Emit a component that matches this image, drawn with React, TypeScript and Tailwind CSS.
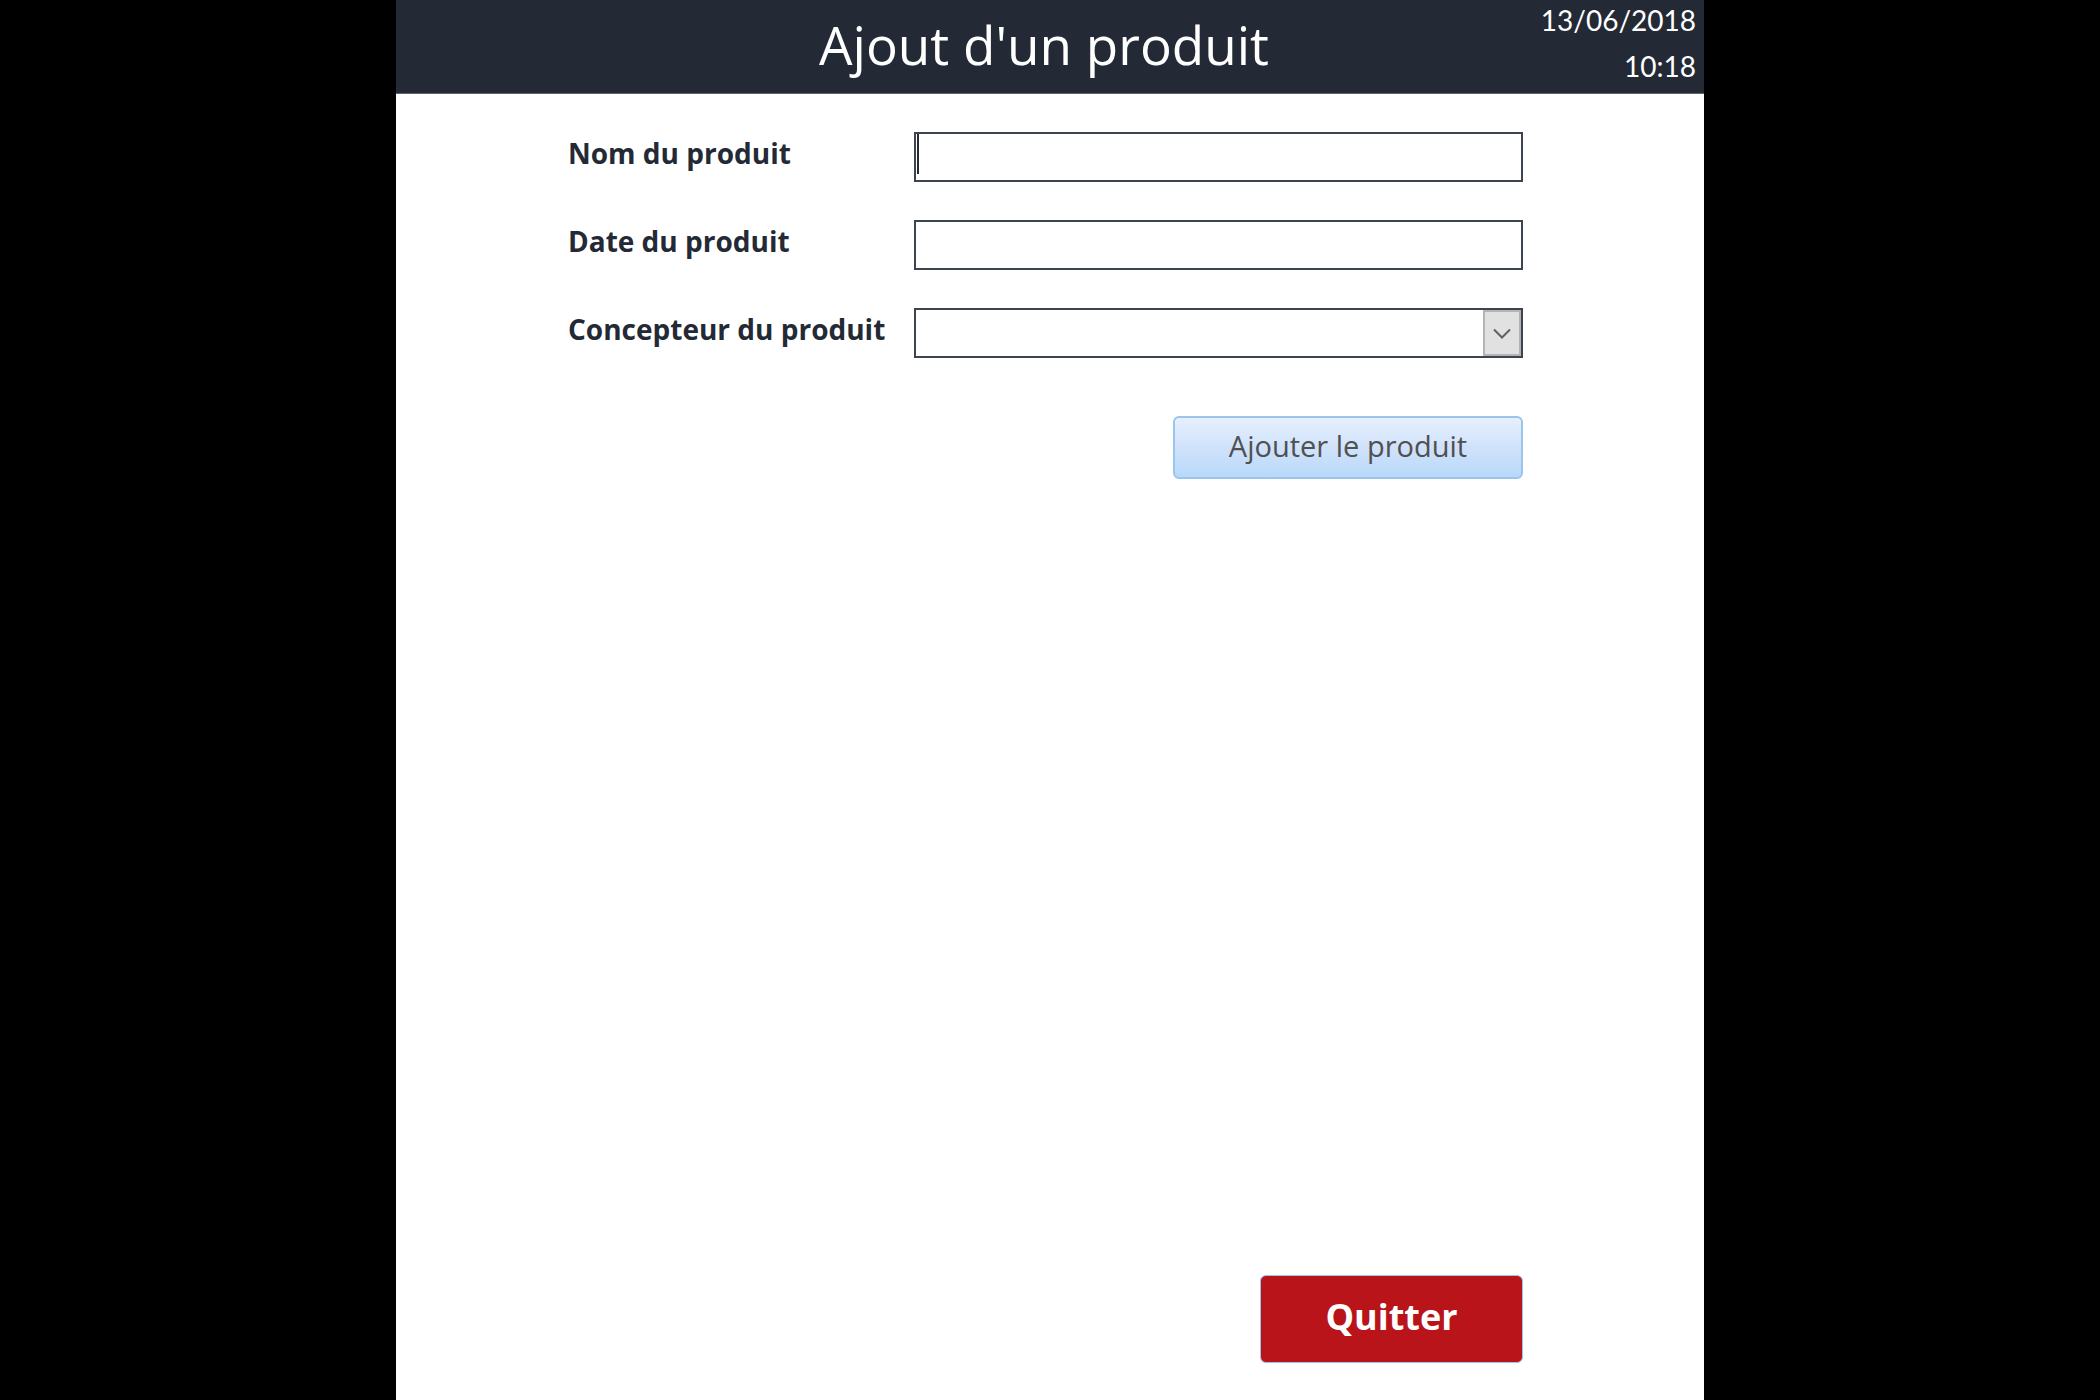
import type { ReactNode } from "react";

function Field({ id, label, children }: { id: string; label: string; children: ReactNode }) {
  return (
    <div className="grid grid-cols-[346px_minmax(0,1fr)] items-center">
      <label htmlFor={id} className="pb-2 text-[28px] leading-9 font-bold whitespace-nowrap text-[#232a35]">
        {label}
      </label>
      <div className="relative">{children}</div>
    </div>
  );
}

const control =
  "block h-[50px] w-full appearance-none rounded-none border-2 border-[#3d444f] bg-white px-2 text-[28px] text-[#232a35] outline-none";

export default function App() {
  return (
    <div className="min-h-screen bg-black font-['Open_Sans',sans-serif]">
      <main className="mx-auto flex min-h-screen w-full max-w-[1308px] flex-col bg-white">
        <header className="grid h-[94px] grid-cols-[1fr_auto_1fr] items-center border-b border-[#5d626e] bg-[#232a35] pr-2 text-white">
          <h1 className="col-start-2 pr-1 pb-1 text-[53px] leading-[64px]">Ajout d'un produit</h1>
          <div className="flex flex-col gap-[6px] self-start text-right font-[Lato,sans-serif] text-[28px] leading-10">
            <time dateTime="2018-06-13">13/06/2018</time>
            <time dateTime="10:18">10:18</time>
          </div>
        </header>
        <form
          className="flex grow flex-col pt-[38px] pr-[181px] pb-[37px] pl-[172px]"
          onSubmit={(e) => e.preventDefault()}
        >
          <div className="flex flex-col gap-[38px]">
            <Field id="nom" label="Nom du produit">
              <input id="nom" type="text" className={control + " caret-transparent"} />
              <span aria-hidden="true" className="absolute top-[2px] left-[3px] h-10 w-[2px] bg-[#232a35]" />
            </Field>
            <Field id="date" label="Date du produit">
              <input id="date" type="text" className={control} />
            </Field>
            <Field id="concepteur" label="Concepteur du produit">
              <select id="concepteur" defaultValue="" className={control}>
                <option value="" />
              </select>
              <span
                aria-hidden="true"
                className="pointer-events-none absolute inset-y-[2px] right-[2px] flex w-[38px] items-center justify-center border-2 border-[#b4b4b4] bg-[#e1e1e1]"
              >
                <svg viewBox="0 0 18 11" className="h-[11px] w-[18px]" fill="none" stroke="#606060" strokeWidth="2">
                  <path d="M1 1.5 9 9.5 17 1.5" />
                </svg>
              </span>
            </Field>
          </div>
          <button
            type="submit"
            className="mt-[58px] flex h-[63px] w-[350px] items-center justify-center self-end rounded-md border-2 border-[#9cc5ec] bg-linear-to-b from-[#e6f0fe] via-[#d0e2fb] to-[#b8d9fa] pb-1 text-[29px] text-[#505050]"
          >
            Ajouter le produit
          </button>
          <button
            type="button"
            className="mt-auto flex h-[88px] w-[263px] items-center justify-center self-end rounded-md border border-[#9cc5ec] bg-[#b91419] pb-1 text-4xl font-bold text-white"
          >
            Quitter
          </button>
        </form>
      </main>
    </div>
  );
}
